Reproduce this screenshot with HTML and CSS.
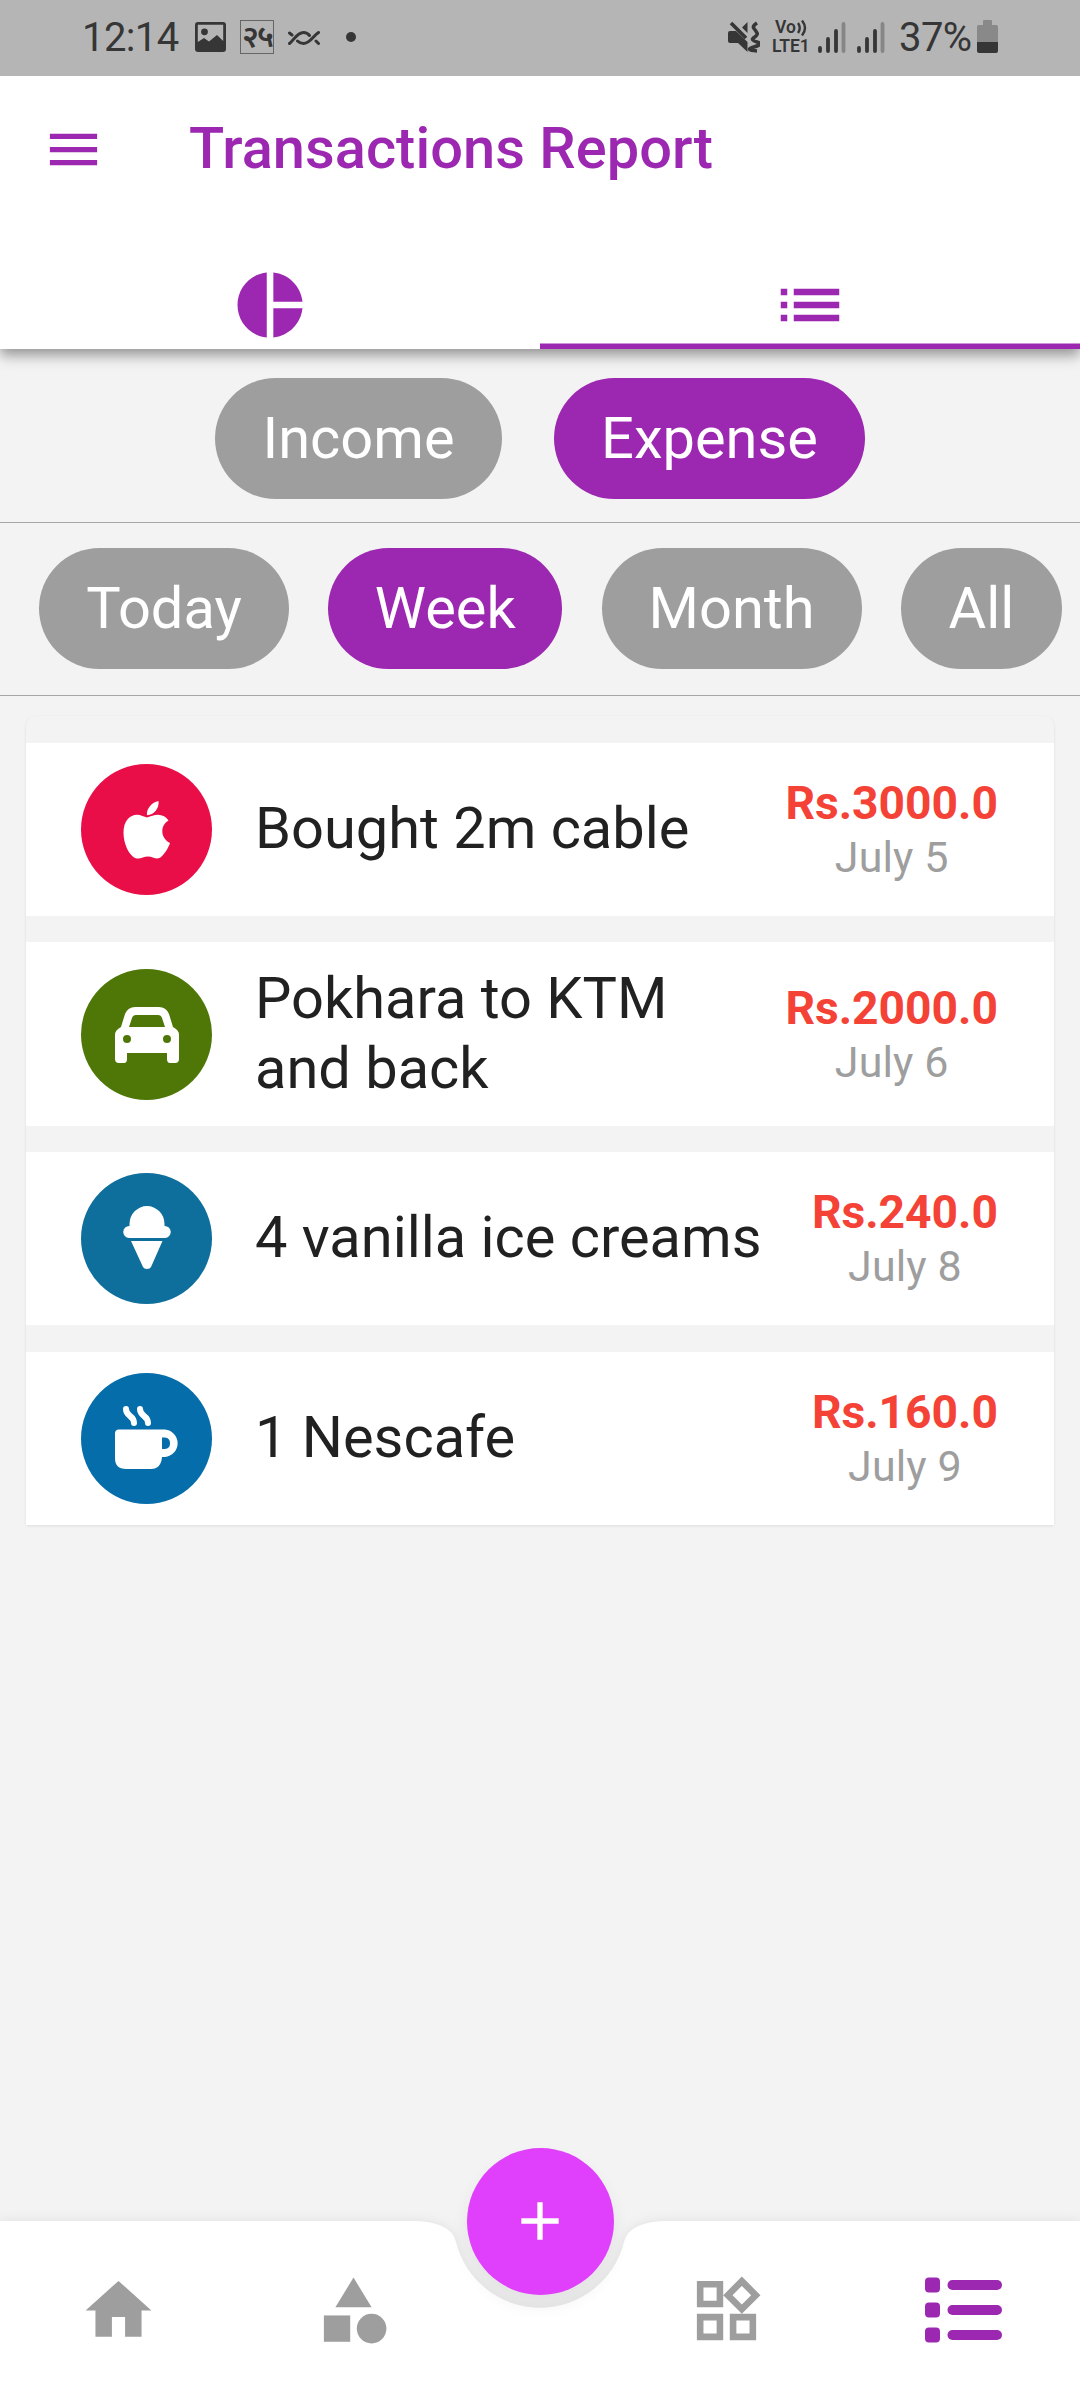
FILE: index.html
```html
<!DOCTYPE html>
<html lang="en">
<head>
<meta charset="utf-8">
<title>Transactions Report</title>
<link rel="stylesheet" href="styles.css">
</head>
<body>
<div class="screen">
  <div class="statusbar">
    <span class="clock">12:14</span>
    <svg class="st-image" width="31" height="30" viewBox="0 0 31 30"><path fill-rule="evenodd" d="M3 0h25a3 3 0 0 1 3 3v24a3 3 0 0 1-3 3H3a3 3 0 0 1-3-3V3a3 3 0 0 1 3-3zM2.800 2.800V20L9 16l5 3.500L22 13l6.200 6V2.800z"/><circle cx="9.500" cy="9.800" r="3.400"/></svg>
    <span class="daybox">२५</span>
    <svg class="st-dna" width="32" height="14" viewBox="0 0 32 14"><path d="M1.500 12.500C6 9 9 1.500 15.500 1.500c3 0 4.500 1 6 3M9.500 10c2 2 3.500 2.500 6 2.500C22 12.500 25 5 30.500 1.500M1.500 2l2.500 2M28 10l2.500 2.500"/></svg>
    <span class="st-dot"></span>
    <svg class="st-mute" width="32" height="32" viewBox="0 0 32 32"><path d="M2 10h6L19.500 21V31L10 22H2Q0 22 0 20V12Q0 10 2 10zM19.500 1V12L14 6.500z"/><path class="line" d="M3 2L18 17M29 2Q24 5 26 7.500T29 12T26 16.500T29 21T26 26T29 30"/></svg>
    <div class="volte"><span class="vo">Vo<svg width="11" height="16" viewBox="0 0 11 16"><path d="M2 3Q5.500 8 2 13M6 .5Q12 8 6 15.500"/></svg></span><span class="lte">LTE1</span></div>
    <svg class="st-sig" width="28" height="31" viewBox="0 0 28 31"><path d="M2 26v3M10 17v12M18 9v20"/><path class="dim" d="M25.500 2v27"/></svg>
    <svg class="st-sig second" width="28" height="31" viewBox="0 0 28 31"><path d="M2 26v3M10 17v12M18 9v20"/><path class="dim" d="M25.500 2v27"/></svg>
    <span class="percent">37%</span>
    <svg class="st-bat" width="21" height="33" viewBox="0 0 21 33"><path class="dimfill" d="M7 0h7q1 0 1 1v4h4.500q1.500 0 1.500 1.500V22H0V6.500Q0 5 1.500 5H6V1q0-1 1-1z"/><path d="M0 22h21v9q0 2-2 2H2q-2 0-2-2z"/></svg>
  </div>

  <header class="appbar">
    <div class="titlebar">
      <svg class="menu" width="63" height="63" viewBox="0 0 24 24"><path d="M3 18h18v-2H3v2zm0-5h18v-2H3v2zm0-7v2h18V6H3z"/></svg>
      <h1>Transactions Report</h1>
    </div>
    <nav class="tabs">
      <a class="tab"><svg viewBox="0 0 24 24"><path d="M11 2v20c-5.070-.5-9-4.790-9-10s3.930-9.500 9-10zm2.030 0v8.990H22c-.47-4.740-4.240-8.520-8.970-8.990zm0 11.010V22c4.740-.47 8.500-4.250 8.970-8.990h-8.970z"/></svg></a>
      <a class="tab active"><svg viewBox="0 0 24 24"><path d="M3 13h2v-2H3v2zm0 4h2v-2H3v2zm0-8h2V7H3v2zm4 4h14v-2H7v2zm0 4h14v-2H7v2zM7 7v2h14V7H7z"/></svg></a>
    </nav>
  </header>

  <div class="filters kinds">
    <button class="chip income">Income</button>
    <button class="chip expense on">Expense</button>
  </div>
  <div class="filters periods">
    <button class="chip today">Today</button>
    <button class="chip week on">Week</button>
    <button class="chip month">Month</button>
    <button class="chip all">All</button>
  </div>

  <main class="list">
    <div class="row">
      <span class="badge red"><svg width="48" height="59" viewBox="0 0 48 59"><path d="M35.500 1C36.500 8 31 15 24 15.200C23 9 29 2 35.500 1z"/><path d="M24 17.500C28 16.500 31 14.800 35 14.800C39.500 15 43 17 45.500 20.500C37 25.500 37 38 47 43C45 49 41 54.500 38 57C34 60.500 30 56.500 25 56.500C20 56.500 17 60 12 58C6 55 .5 44 .5 32.500C.5 21 7 14.800 14 14.800C18 14.800 21 17 24 17.500z"/></svg></span>
      <span class="name">Bought 2m cable</span>
      <span class="sum"><b>Rs.3000.0</b><i>July 5</i></span>
    </div>
    <div class="row tall">
      <span class="badge green"><svg width="64" height="56" viewBox="0 0 64 56"><path fill-rule="evenodd" d="M20 0H44Q51 0 54 7L58 20Q64 23 64 28V52Q64 56 60 56H55Q52 56 52 52V46H12V52Q12 56 9 56H4Q0 56 0 52V28Q0 23 6 20L10 7Q13 0 20 0zM21 8Q18 8 17 11L14 20H50L47 11Q46 8 43 8zM12 28A4 4 0 1 0 12 36A4 4 0 1 0 12 28zM52 28A4 4 0 1 0 52 36A4 4 0 1 0 52 28z"/></svg></span>
      <span class="name">Pokhara to KTM<br>and back</span>
      <span class="sum"><b>Rs.2000.0</b><i>July 6</i></span>
    </div>
    <div class="row">
      <span class="badge teal"><svg class="up" width="48" height="63" viewBox="0 0 48 63"><path d="M6.500 20V18A17.500 18 0 0 1 41.500 18V20A6 6 0 0 1 42 32H6A6 6 0 0 1 6.500 20zM8 35H39.500L28 61Q27 63 24 63Q21 63 20 61z"/></svg></span>
      <span class="name">4 vanilla ice creams</span>
      <span class="sum"><b>Rs.240.0</b><i>July 8</i></span>
    </div>
    <div class="row">
      <span class="badge blue"><svg class="up" width="64" height="63" viewBox="0 0 64 63"><path fill-rule="evenodd" d="M4 23.500H50A13.800 13.800 0 0 1 50 51H47Q46 63 36 63H11Q0 63 0 52V27.500Q0 23.500 4 23.500zM47 31.500V43H50A5.800 5.800 0 0 0 50 31.500z"/><path class="steam" d="M11 3C11 11 19 9 19 17M25 3C25 11 33 9 33 17"/></svg></span>
      <span class="name">1 Nescafe</span>
      <span class="sum"><b>Rs.160.0</b><i>July 9</i></span>
    </div>
  </main>

  <footer class="bottombar">
    <svg class="shape" width="1080" height="179" viewBox="0 0 1080 179"><path d="M0 0H411.400Q450.800 0 455.900 20.800A86.600 86.600 0 0 0 624.100 20.800Q629.200 0 668.600 0H1080V179H0z"/></svg>
    <a class="item home"><svg viewBox="0 0 24 24"><path d="M10 20v-6h4v6h5v-8h3L12 3 2 12h3v8z"/></svg></a>
    <a class="item category"><svg viewBox="0 0 24 24"><path d="M12 2l-5.500 9h11z"/><circle cx="17.500" cy="17.500" r="4.500"/><path d="M3 13.500h8v8H3z"/></svg></a>
    <button class="fab"><svg width="64" height="64" viewBox="0 0 24 24"><path d="M19 13h-6v6h-2v-6H5v-2h6V5h2v6h6v2z"/></svg></button>
    <a class="item widgets"><svg viewBox="0 0 24 24"><path d="M16.660 4.520l2.830 2.830-2.830 2.830-2.830-2.830 2.830-2.830M9 5v4H5V5h4m10 10v4h-4v-4h4M9 15v4H5v-4h4m7.660-13.310L11 7.340 16.660 13l5.660-5.660-5.660-5.650zM11 3H3v8h8V3zm10 10h-8v8h8v-8zm-10 0H3v8h8v-8z"/></svg></a>
    <a class="item report active"><svg viewBox="0 0 79 79"><rect x="1" y="6.500" width="15" height="15" rx="4"/><rect x="1" y="31.500" width="15" height="15" rx="4"/><rect x="1" y="56.500" width="15" height="15" rx="4"/><rect x="23.500" y="9" width="54.500" height="10" rx="5"/><rect x="23.500" y="34" width="54.500" height="10" rx="5"/><rect x="23.500" y="59" width="54.500" height="10" rx="5"/></svg></a>
  </footer>
</div>
</body>
</html>
```
FILE: styles.css
```css
* { box-sizing: border-box; }
body { margin: 0; font-family: Roboto, "Noto Sans", sans-serif; background: #f3f3f3; }
svg { display: block; flex: none; }
button { border: 0; padding: 0; font: inherit; color: inherit; }
.screen { width: 1080px; height: 2400px; display: flex; flex-direction: column; overflow: hidden; }

.statusbar { height: 76px; padding: 0 82px; background: #b5b5b5; color: #363636; fill: #363636; display: flex; align-items: flex-start; font-size: 40px; flex: none; }
.statusbar > * { flex: none; }
.clock { width: 113px; line-height: 76px; letter-spacing: -.6px; }
.st-image { margin-top: 22px; }
.daybox { width: 34px; height: 34px; margin: 20px 0 0 14px; border: 1px solid #666; font-size: 31px; line-height: 32px; font-weight: 600; display: flex; justify-content: center; letter-spacing: -2px; }
.st-dna { margin: 31px 0 0 14px; fill: none; stroke: #363636; stroke-width: 3; stroke-linecap: round; }
.st-dot { width: 10px; height: 10px; margin: 32px 0 0 26px; border-radius: 50%; background: #363636; }
.st-mute { margin: 21px 0 0 372px; }
.st-mute .line { fill: none; stroke: #363636; stroke-width: 3.600; }
.volte { width: 40px; margin: 18px 0 0 12px; display: flex; flex-direction: column; font-weight: 600; font-size: 17.500px; line-height: 19px; }
.vo { height: 19px; display: flex; align-items: center; padding-left: 3px; }
.vo svg { fill: none; stroke: #363636; stroke-width: 2.400; }
.lte { height: 19px; white-space: nowrap; letter-spacing: -.1px; }
.st-sig { margin: 22px 0 0 6px; fill: none; stroke: #363636; stroke-width: 3.800; stroke-linecap: round; }
.st-sig .dim { stroke: #868686; }
.st-sig.second { margin-left: 11px; }
.percent { width: 92px; padding-left: 14px; line-height: 76px; letter-spacing: -.6px; white-space: nowrap; }
.st-bat { margin-top: 20px; }
.dimfill { fill: #898989; }

.appbar { height: 273px; flex: none; background: #fff; color: #9c27b0; fill: #9c27b0; box-shadow: 0 5px 11px -1px rgba(0,0,0,.2), 0 10px 13px rgba(0,0,0,.14), 0 3px 12px rgba(0,0,0,.12); clip-path: inset(0 0 -40px 0); }
.titlebar { height: 147px; display: flex; align-items: center; padding-left: 42px; }
h1 { margin: 0 0 3px 84px; font-size: 57.750px; font-weight: 500; letter-spacing: .04px; line-height: 70px; white-space: nowrap; }
.tabs { height: 126px; display: flex; }
.tab { flex: 1; display: flex; align-items: center; justify-content: center; padding: 42px 0 5px; }
.tab svg { width: 78px; height: 78px; }
.tab.active { box-shadow: inset 0 -5.500px #9c27b0; }

.filters { flex: none; display: flex; border-bottom: 1px solid #a6a6a6; }
.kinds { height: 174px; padding-top: 29px; justify-content: center; gap: 52px; }
.periods { height: 173px; padding: 25px 0 0 39px; gap: 39.300px; }
.chip { height: 121px; padding-bottom: 2px; border-radius: 61px; background: #9e9e9e; color: #fff; font-size: 57.750px; line-height: 118px; flex: none; }
.chip.on { background: #9c27b0; }
.income { width: 287px; }
.expense { width: 311px; }
.today { width: 250px; }
.week { width: 234px; }
.month { width: 260px; }
.all { width: 161px; }

.list { margin: 20px 26px 0; padding-top: 27px; display: flex; flex-direction: column; gap: 26px; border-radius: 10px 10px 2px 2px; box-shadow: 0 1px 3px rgba(0,0,0,.09); flex: none; }
.row { height: 173px; padding: 0 56px 0 55px; background: #fff; display: flex; align-items: center; }
.row.tall { height: 184px; }
.row:last-child { margin-top: 1px; }
.badge { width: 131px; height: 131px; border-radius: 50%; display: flex; align-items: center; justify-content: center; fill: #fff; }
.badge svg { margin-top: 1px; }
.badge .up { margin: -2px 0 0; }
.red { background: #ea0e48; }
.red svg { margin: 0; }
.green { background: #4e7708; }
.teal { background: #0f6f9c; }
.blue { background: #066dab; }
.steam { fill: none; stroke: #fff; stroke-width: 6; stroke-linecap: round; }
.name { flex: 1; padding: 0 0 1px 43px; font-size: 57.750px; line-height: 69.300px; color: #212121; white-space: nowrap; }
.sum { display: flex; flex-direction: column; align-items: center; line-height: 54px; padding-top: 1px; }
.sum b { font-size: 46.200px; color: #f44336; font-weight: 700; }
.sum i { font-size: 43px; font-style: normal; color: #9e9e9e; letter-spacing: .1px; }

.bottombar { position: relative; height: 179px; margin-top: auto; padding-left: 78.500px; display: flex; align-items: center; fill: #9e9e9e; flex: none; }
.shape { position: absolute; left: 0; top: 0; fill: #fff; overflow: visible; filter: drop-shadow(0 0 6px rgba(0,0,0,.08)); }
.item { position: relative; flex: none; }
.item svg { width: 79px; height: 79px; }
.category { margin-left: 156.500px; }
.widgets { margin-left: 73px; }
.report { margin-left: 158.500px; fill: #9c27b0; }
.fab { position: relative; flex: none; width: 147px; height: 147px; margin: -179px 0 0 73.500px; border-radius: 50%; background: #e040fb; fill: #fff; display: flex; align-items: center; justify-content: center; box-shadow: 0 10px 18px rgba(0,0,0,.07); }
```
